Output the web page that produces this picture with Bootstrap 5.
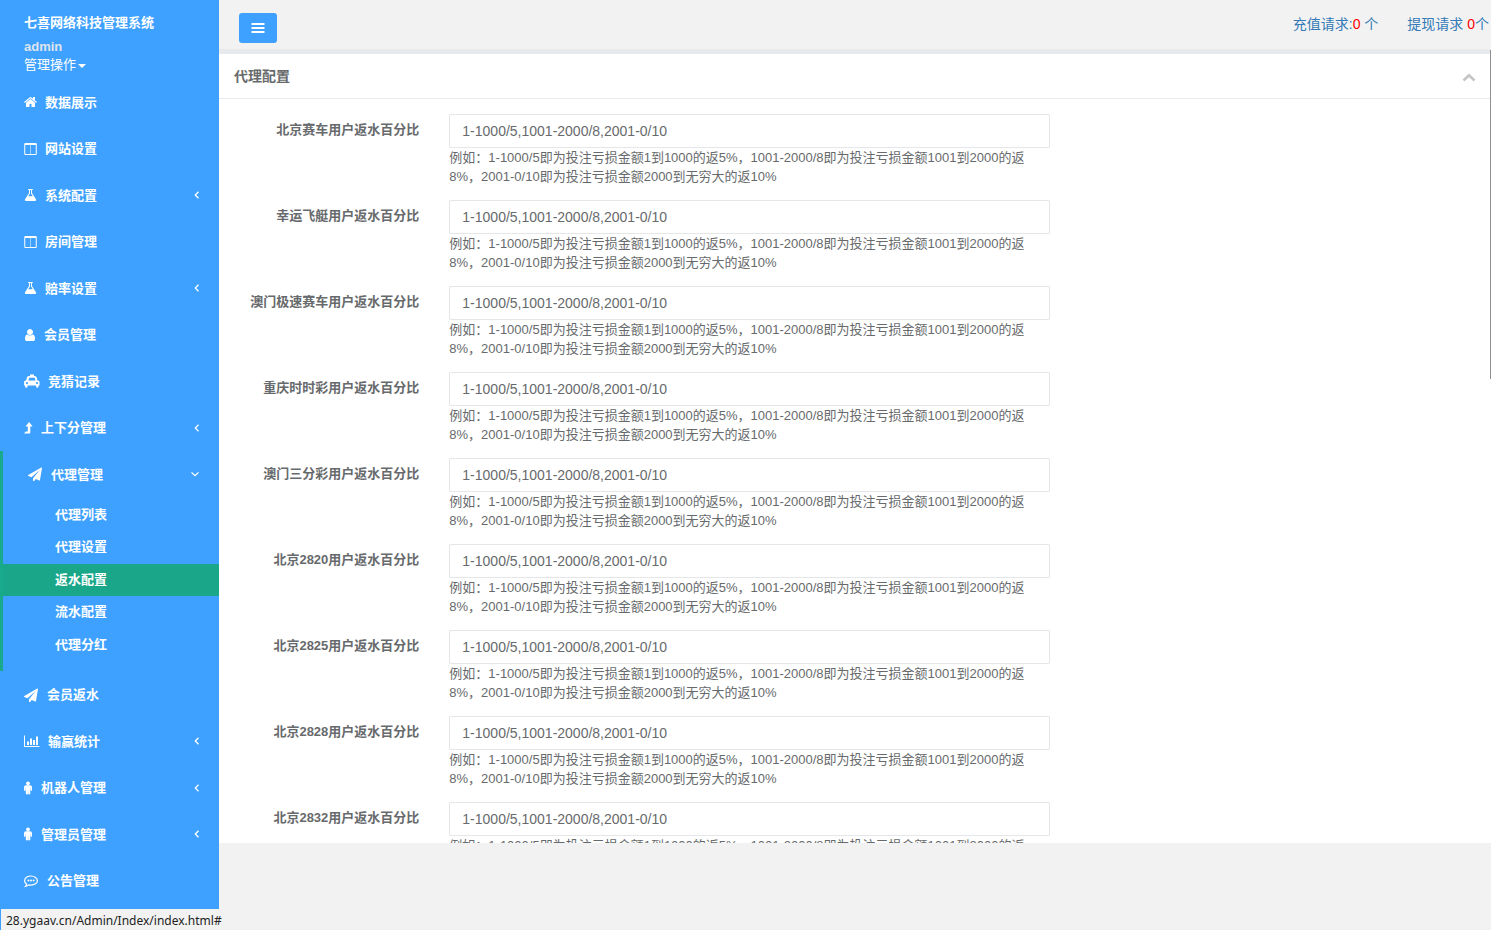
<!DOCTYPE html>
<html lang="zh-CN">
<head>
<meta charset="utf-8">
<meta name="viewport" content="width=device-width, initial-scale=1">
<title>七喜网络科技管理系统</title>
<link href="https://cdn.jsdelivr.net/npm/bootstrap@5.3.0/dist/css/bootstrap.min.css" rel="stylesheet">
<style>
body{font:13px/19px "Liberation Sans","Noto Sans CJK SC",sans-serif;color:#676a6c;background:#f2f2f2}
a{text-decoration:none}
.side{width:219px;background:#3ea1ff;color:#fff}
.side a{color:#fff}
.brand{padding:14px 24px 5px;line-height:18px}
.brand .user-name{color:#dfe4ed;margin-top:6px}
.brand .dropdown-toggle::after{border-width:4px 4px 0;margin-left:2px;vertical-align:1px}
.menu>li>a{display:flex;align-items:center;gap:8px;height:46px;padding:0 18px 0 24px;font-weight:700}
.menu>li:nth-child(even)>a{height:47px}
.menu svg{height:14px;fill:currentColor;flex:none}
.w9{width:9px}.w12{width:12px}.w13{width:13px}.w15{width:15px}.w16{width:16px}
.menu .arrow{width:8px;height:8px;margin-left:auto;fill:none;stroke:#fff;stroke-width:1.3}
.menu>li.open{border-left:3px solid #19aa8d;padding-bottom:10px}
.menu>li.open>a{padding:0 20px 0 25px}
.submenu{padding-top:2px}
.submenu a{display:block;height:32px;line-height:32px;padding-left:52px;font-weight:700}
.submenu li:nth-child(even){padding-bottom:1px}
.submenu .current{background:#19a689}
.topbar{height:50px;padding:0 2px 0 20px;font-size:14px}
.topbar nav{gap:29px}
.topbar a{color:#337ab7}
.topbar b{color:red;font-weight:400}
.toggler{width:38px;height:30px;margin-top:6px;background:#3ea1ff;border-radius:3px;padding:0;line-height:1;border:0}
.pane{height:calc(100vh - 137px);background:#fff;border-top:4px solid #e7eaec}
.topline{border-bottom:1px solid #e7eaec}
.pane-title{height:45px;padding:0 15px;border-bottom:1px solid #e7eaec}
.pane-title h5{font-size:14px;font-weight:700;margin:0}
.rules{padding:15px 5px}
.rules .row{--bs-gutter-x:30px;margin:0 0 14px}
.rules label{font-weight:700;padding-top:6px}
.rules .form-control{height:34px;border:1px solid #e5e6e7;border-radius:1px;padding:6px 12px;font-size:14px;color:#676a6c}
.thumb{width:1px;height:329px;background:#8f8f8f;top:-4px;right:0}
.status{left:1px;bottom:0;height:21px;padding:0 5px;background:#f2f2f2;color:#222;font:12px/23px "Noto Sans",sans-serif}
</style>
<script src="https://cdn.jsdelivr.net/npm/bootstrap@5.3.0/dist/js/bootstrap.bundle.min.js"></script>
</head>
<body>
<svg class="d-none" xmlns="http://www.w3.org/2000/svg">
<symbol id="home" viewBox="64 0 1664 1792"><path d="M1472 992v480q0 26-19 45t-45 19h-384v-384h-256v384h-384q-26 0-45-19t-19-45v-480q0-1 .5-3t.5-3l575-474 575 474q1 2 1 6zm223-69l-62 74q-8 9-21 11h-3q-13 0-21-7l-692-577-692 577q-12 8-24 7-13-2-21-11l-62-74q-8-10-7-23.5t11-21.5l719-599q32-26 76-26t76 26l244 204v-195q0-14 9-23t23-9h192q14 0 23 9t9 23v408l219 182q10 8 11 21.5t-7 23.5z"/></symbol>
<symbol id="columns" viewBox="64 0 1664 1792"><path d="M256 1536h608v-1152h-640v1120q0 13 9.500 22.500t22.500 9.500zm1312-32v-1120h-640v1152h608q13 0 22.500-9.500t9.500-22.500zm128-1216v1216q0 66-47 113t-113 47h-1280q-66 0-113-47t-47-113v-1216q0-66 47-113t113-47h1280q66 0 113 47t47 113z"/></symbol>
<symbol id="flask" viewBox="64 0 1664 1792"><path d="M1591 1448q56 89 21.500 152.500t-140.500 63.500h-1152q-106 0-140.500-63.500t21.500-152.500l503-793v-399h-64q-26 0-45-19t-19-45 19-45 45-19h512q26 0 45 19t19 45-19 45-45 19h-64v399zm-779-725l-210 330h588l-210-330-20-31v-436h-128v436z"/></symbol>
<symbol id="user" viewBox="192 0 1408 1792"><path d="M1536 1399q0 109-62.500 187t-150.500 78h-854q-88 0-150.500-78t-62.500-187q0-85 8.500-160.500t31.500-152 58.500-131 94-89 134.500-34.500q131 128 313 128t313-128q76 0 134.500 34.500t94 89 58.500 131 31.500 152 8.500 160.500zm-256-887q0 159-112.500 271.500t-271.500 112.500-271.500-112.500-112.500-271.500 112.500-271.500 271.500-112.500 271.500 112.500 112.500 271.500z"/></symbol>
<symbol id="taxi" viewBox="0 0 16 14"><path fill-rule="evenodd" d="M6 0.500h4v1.500h.8q1.500 0 1.900 1.500l.8 3h.5q1.500 0 1.500 1.500v3.500h-1v1q0 1.200-1.200 1.200t-1.200-1.200v-1h-8.600v1q0 1.200-1.200 1.200t-1.200-1.200v-1h-1v-3.500q0-1.500 1.500-1.500h.5l.8-3q.4-1.500 1.900-1.500h1.200zM5.200 3.800l-.7 2.700h7l-.7-2.700zM3 8a1.100 1.100 0 100 2.200 1.100 1.100 0 000-2.200zm10 0a1.100 1.100 0 100 2.200 1.100 1.100 0 000-2.200z"/></symbol>
<symbol id="levelup" viewBox="0 0 9 14"><path d="M.3 12.500h5.200q.8 0 .8-.8V5.500h1.700q.6 0 .3-.6L5.500 1.600q-.4-.5-.8 0L1.800 4.900q-.3.600.3.600h1.700v4.900H2q-.2 0-.3.100L.2 12.200q-.1.300.1.300z"/></symbol>
<symbol id="plane" viewBox="0 -64 1920 1792"><path d="M1764 11q33 24 27 64l-256 1536q-5 29-32 45-14 8-31 8-11 0-24-5l-453-185-242 295q-18 23-49 23-13 0-22-4-19-7-30.500-23.500t-11.500-36.500v-349l864-1059-1069 925-395-162q-37-14-40-55-2-40 32-59l1664-960q15-9 32-9 20 0 36 11z"/></symbol>
<symbol id="chart" viewBox="0 0 16 14"><path d="M0 1.500h1v10.500h14.500v1H0zM3 7.500h2v3.500H3zm3-3h2v6.500H6zm3 1.500h2v5H9zm3-3.500h2v8.500h-2z"/></symbol>
<symbol id="male" viewBox="0 0 9 14"><circle cx="4" cy="2.300" r="1.900"/><path d="M2 4.300h4q2 0 2 1.900v2.900q0 .8-.7.800t-.8-.8V6.500h-.2v6q0 .9-1 .9t-1.100-.9V9.500h-.2v3q0 .9-1 .9t-1.200-.9v-6h-.2v2.600q0 .8-.8.800T0 9.100V6.200q0-1.900 2-1.900z"/></symbol>
<symbol id="comment" viewBox="0 0 15 14"><path d="M7 2C3.500 2 .6 4 .6 6.700c0 1.400.8 2.600 2.100 3.500-.2.900-.6 1.500-1.200 2.200 1.500-.2 2.500-.7 3.400-1.500.7.200 1.400.2 2.100.2 3.500 0 6.400-1.900 6.400-4.400S10.500 2 7 2z" fill="none" stroke="currentColor" stroke-width="1.200"/><circle cx="4.400" cy="6.600" r="1"/><circle cx="7" cy="6.600" r="1"/><circle cx="9.600" cy="6.600" r="1"/></symbol>
<symbol id="left" viewBox="0 0 8 8"><path d="M5.500.7 2.300 4l3.200 3.300"/></symbol>
<symbol id="down" viewBox="0 0 8 8"><path d="M.5 2.400 4 5.700l3.500-3.300"/></symbol>
</svg>
<div class="d-flex min-vh-100">
<aside class="side flex-shrink-0">
  <div class="brand">
    <strong class="d-block">七喜网络科技管理系统</strong>
    <strong class="user-name d-block">admin</strong>
    <a href="#" class="dropdown-toggle d-block">管理操作</a>
  </div>
  <ul class="menu list-unstyled mb-0">
    <li><a href="#"><svg class="w13"><use href="#home"/></svg>数据展示</a></li>
    <li><a href="#"><svg class="w13"><use href="#columns"/></svg>网站设置</a></li>
    <li><a href="#"><svg class="w13"><use href="#flask"/></svg>系统配置<svg class="arrow"><use href="#left"/></svg></a></li>
    <li><a href="#"><svg class="w13"><use href="#columns"/></svg>房间管理</a></li>
    <li><a href="#"><svg class="w13"><use href="#flask"/></svg>赔率设置<svg class="arrow"><use href="#left"/></svg></a></li>
    <li><a href="#"><svg class="w12"><use href="#user"/></svg>会员管理</a></li>
    <li><a href="#"><svg class="w16"><use href="#taxi"/></svg>竞猜记录</a></li>
    <li><a href="#"><svg class="w9"><use href="#levelup"/></svg>上下分管理<svg class="arrow"><use href="#left"/></svg></a></li>
    <li class="open"><a href="#"><svg class="w15"><use href="#plane"/></svg>代理管理<svg class="arrow"><use href="#down"/></svg></a>
      <ul class="submenu list-unstyled">
        <li><a href="#">代理列表</a></li>
        <li><a href="#">代理设置</a></li>
        <li><a href="#" class="current">返水配置</a></li>
        <li><a href="#">流水配置</a></li>
        <li><a href="#">代理分红</a></li>
      </ul></li>
    <li><a href="#"><svg class="w15"><use href="#plane"/></svg>会员返水</a></li>
    <li><a href="#"><svg class="w16"><use href="#chart"/></svg>输赢统计<svg class="arrow"><use href="#left"/></svg></a></li>
    <li><a href="#"><svg class="w9"><use href="#male"/></svg>机器人管理<svg class="arrow"><use href="#left"/></svg></a></li>
    <li><a href="#"><svg class="w9"><use href="#male"/></svg>管理员管理<svg class="arrow"><use href="#left"/></svg></a></li>
    <li><a href="#"><svg class="w15"><use href="#comment"/></svg>公告管理</a></li>
  </ul>
</aside>
<main class="flex-grow-1">
  <header class="topbar topline d-flex align-items-center justify-content-between">
    <button type="button" class="toggler btn" aria-label="菜单"><svg width="14" height="14" viewBox="0 0 14 14" fill="#fff"><path d="M.5 2h13v2H.5zm0 4h13v2H.5zm0 4h13v2H.5z"/></svg></button>
    <nav class="d-flex"><a href="#">充值请求:<b>0</b> 个</a><a href="#">提现请求 <b>0</b>个</a></nav>
  </header>
  <section class="pane position-relative">
    <div class="h-100 overflow-hidden">
    <div class="pane-title d-flex align-items-center justify-content-between"><h5>代理配置</h5>
      <a href="#" aria-label="收起"><svg width="14" height="14" viewBox="0 0 14 14" fill="none" stroke="#c4c4c4" stroke-width="2.600"><path d="M1.500 10.500 7 5.200l5.500 5.300"/></svg></a></div>
    <form class="rules" id="rules"></form>
    </div>
    <div class="thumb position-absolute"></div>
  </section>
</main>
</div>
<div class="status position-fixed">28.ygaav.cn/Admin/Index/index.html#</div>
<script>
const games = ['北京赛车','幸运飞艇','澳门极速赛车','重庆时时彩','澳门三分彩','北京2820','北京2825','北京2828','北京2832'];
document.getElementById('rules').innerHTML = games.map((g, i) => `
  <div class="row">
    <label class="col-2 text-end" for="rate${i}">${g}用户返水百分比</label>
    <div class="col-6">
      <input class="form-control" id="rate${i}" type="text" value="1-1000/5,1001-2000/8,2001-0/10">
      <div class="hint">例如：1-1000/5即为投注亏损金额1到1000的返5%，1001-2000/8即为投注亏损金额1001到2000的返8%，2001-0/10即为投注亏损金额2000到无穷大的返10%</div>
    </div>
  </div>`).join('');
</script>
</body>
</html>
